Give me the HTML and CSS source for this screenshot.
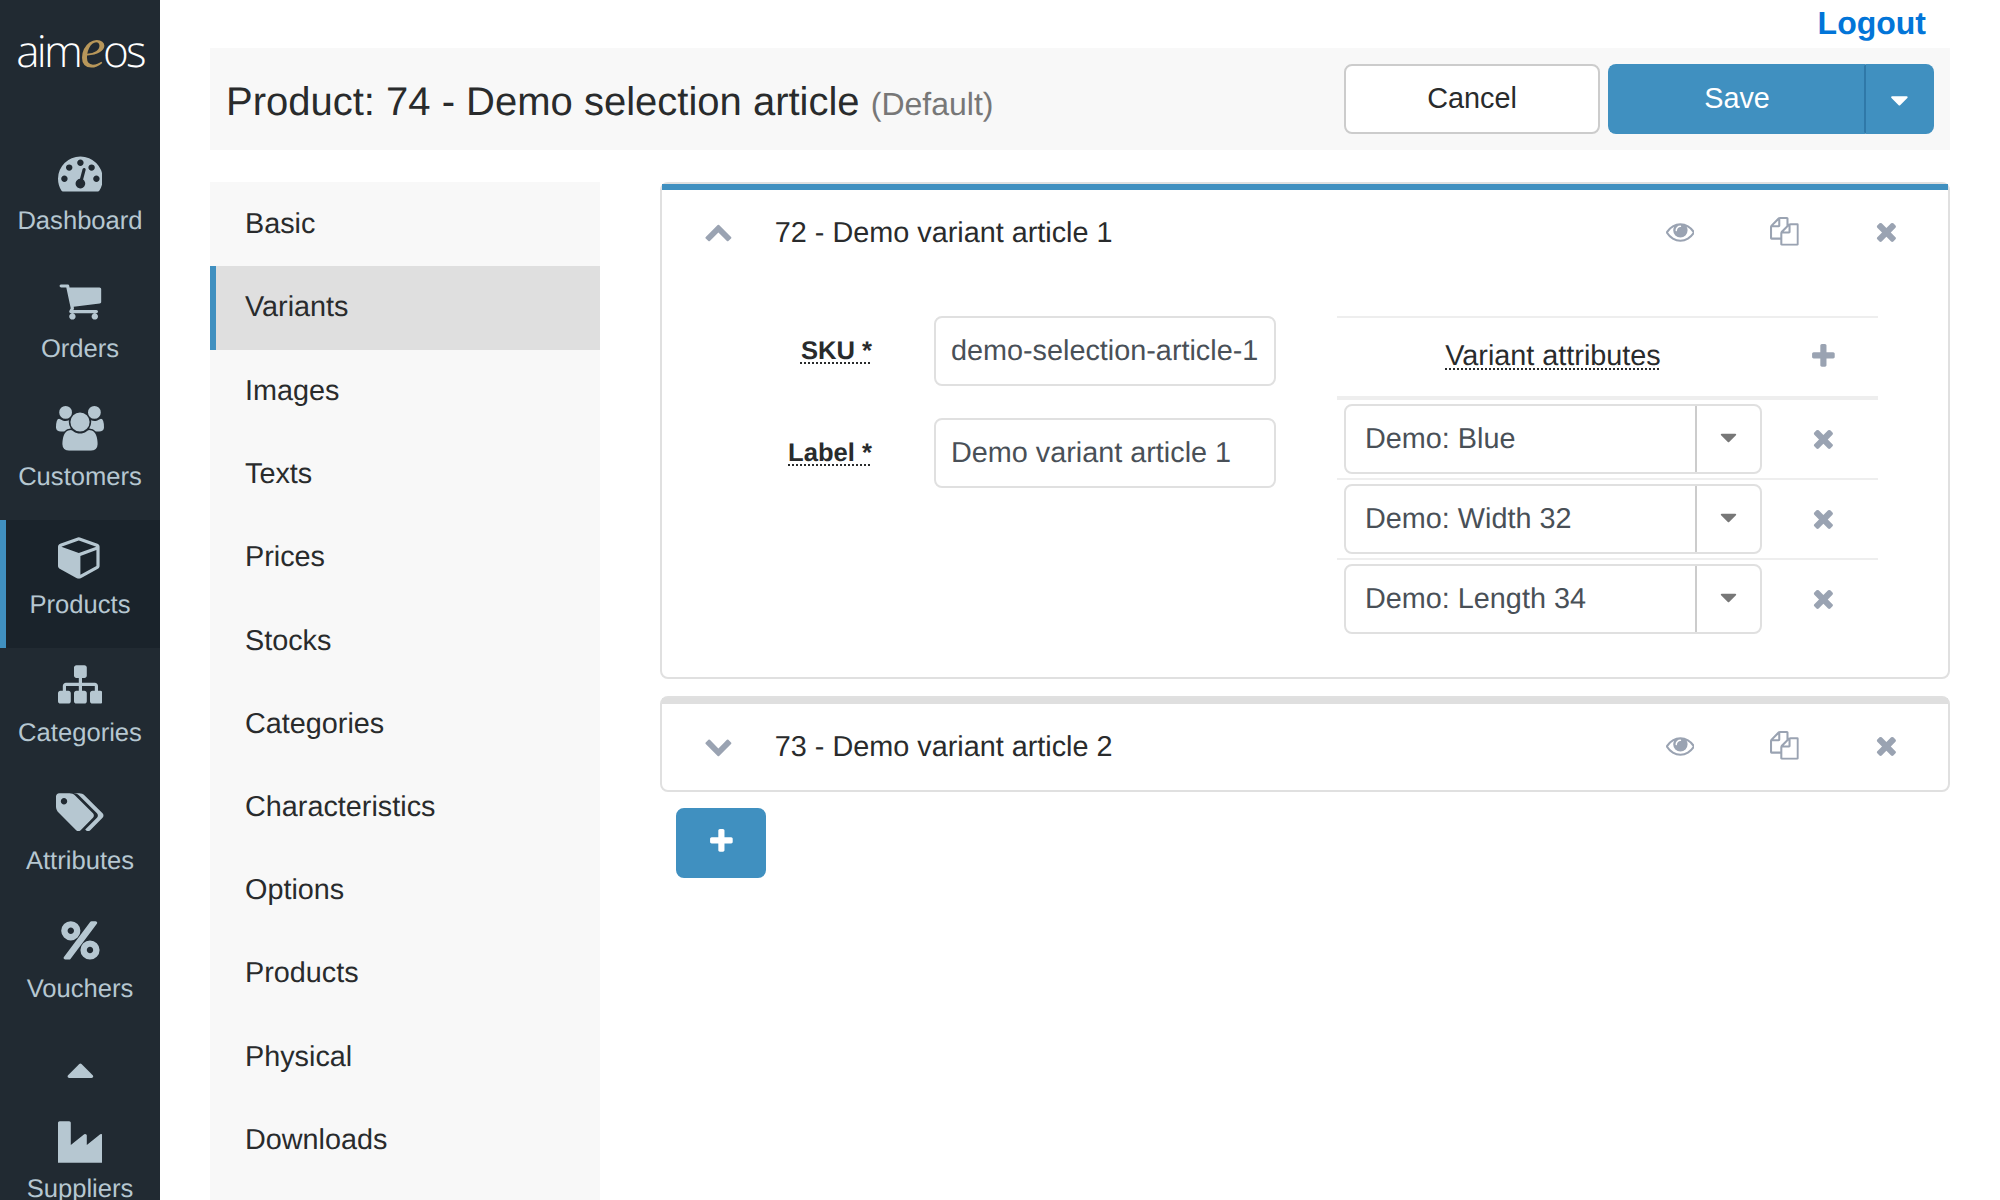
FILE: index.html
```html
<!DOCTYPE html>
<html>
<head>
<meta charset="utf-8">
<title>Product: 74 - Demo selection article</title>
<link rel="stylesheet" href="styles.css">
</head>
<body>
<svg class="sprite" xmlns="http://www.w3.org/2000/svg">
	<symbol id="i-dashboard" viewBox="0 0 1792 1792"><path d="M384 1152q0-53-37.5-90.5t-90.5-37.5-90.5 37.5-37.5 90.5 37.5 90.5 90.5 37.5 90.5-37.5 37.5-90.5zm192-448q0-53-37.5-90.5t-90.5-37.5-90.5 37.5-37.5 90.5 37.5 90.5 90.5 37.5 90.5-37.5 37.5-90.5zm428 481l101-382q6-26-7.5-48.5t-38.5-29.5-48 6.5-30 39.5l-101 382q-60 5-107 43.5t-63 98.5q-20 77 20 146t117 89 146-20 89-117q16-60-6-117t-72-91zm660-33q0-53-37.5-90.5t-90.5-37.5-90.5 37.5-37.5 90.5 37.5 90.5 90.5 37.5 90.5-37.5 37.5-90.5zm-640-640q0-53-37.5-90.5t-90.5-37.5-90.5 37.5-37.5 90.5 37.5 90.5 90.5 37.5 90.5-37.5 37.5-90.5zm448 192q0-53-37.5-90.5t-90.5-37.5-90.5 37.5-37.5 90.5 37.5 90.5 90.5 37.5 90.5-37.5 37.5-90.5zm320 448q0 261-141 483-19 29-54 29h-1402q-35 0-54-29-141-221-141-483 0-182 71-348t191-286 286-191 348-71 348 71 286 191 191 286 71 348z"/></symbol>
	<symbol id="i-cart" viewBox="0 0 1792 1792"><path d="M704 1536q0 52-38 90t-90 38-90-38-38-90 38-90 90-38 90 38 38 90zm896 0q0 52-38 90t-90 38-90-38-38-90 38-90 90-38 90 38 38 90zm128-1088v512q0 24-16.5 42.5t-40.5 21.5l-1044 122q13 60 13 70 0 16-24 64h920q26 0 45 19t19 45-19 45-45 19h-1024q-26 0-45-19t-19-45q0-11 8-31.5t16-36 21.5-40 15.5-29.5l-177-823h-204q-26 0-45-19t-19-45 19-45 45-19h256q16 0 28.5 6.5t19.5 15.5 13 24.5 8 26 5.5 29.5 4.5 26h1201q26 0 45 19t19 45z"/></symbol>
	<symbol id="i-users" viewBox="0 0 1920 1792"><path d="M593 896q-162 5-265 128h-134q-82 0-138-40.5t-56-118.5q0-353 124-353 6 0 43.5 21t97.5 42.5 119 21.5q67 0 133-23-5 37-5 66 0 139 81 256zm1071 637q0 120-73 189.5t-194 69.5h-874q-121 0-194-69.5t-73-189.5q0-53 3.5-103.5t14-109 26.5-108.5 43-97.5 62-81 85.5-53.5 111.5-20q10 0 43 21.5t73 48 107 48 135 21.5 135-21.5 107-48 73-48 43-21.5q61 0 111.5 20t85.5 53.5 62 81 43 97.5 26.5 108.5 14 109 3.5 103.5zm-1024-1277q0 106-75 181t-181 75-181-75-75-181 75-181 181-75 181 75 75 181zm704 384q0 159-112.5 271.5t-271.5 112.5-271.5-112.5-112.5-271.5 112.5-271.5 271.5-112.5 271.5 112.5 112.5 271.5zm576 225q0 78-56 118.5t-138 40.5h-134q-103-123-265-128 81-117 81-256 0-29-5-66 66 23 133 23 59 0 119-21.5t97.5-42.5 43.5-21q124 0 124 353zm-128-609q0 106-75 181t-181 75-181-75-75-181 75-181 181-75 181 75 75 181z"/></symbol>
	<symbol id="i-cube" viewBox="0 0 1792 1792"><path d="M896 1629l640-349v-636l-640 233v752zm-64-865l698-254-698-254-698 254zm832-252v768q0 35-18 65t-49 47l-704 384q-28 16-61 16t-61-16l-704-384q-31-17-49-47t-18-65v-768q0-40 23-73t61-47l704-256q22-8 44-8t44 8l704 256q38 14 61 47t23 73z"/></symbol>
	<symbol id="i-sitemap" viewBox="0 0 1792 1792"><path d="M1792 1248v320q0 40-28 68t-68 28h-320q-40 0-68-28t-28-68v-320q0-40 28-68t68-28h96v-192h-512v192h96q40 0 68 28t28 68v320q0 40-28 68t-68 28h-320q-40 0-68-28t-28-68v-320q0-40 28-68t68-28h96v-192h-512v192h96q40 0 68 28t28 68v320q0 40-28 68t-68 28h-320q-40 0-68-28t-28-68v-320q0-40 28-68t68-28h96v-192q0-52 38-90t90-38h512v-192h-96q-40 0-68-28t-28-68v-320q0-40 28-68t68-28h320q40 0 68 28t28 68v320q0 40-28 68t-68 28h-96v192h512q52 0 90 38t38 90v192h96q40 0 68 28t28 68z"/></symbol>
	<symbol id="i-tags" viewBox="0 0 1920 1792"><path d="M448 448q0-53-37.5-90.5t-90.5-37.5-90.5 37.5-37.5 90.5 37.5 90.5 90.5 37.5 90.5-37.5 37.5-90.5zm1067 576q0 53-37 90l-491 492q-39 37-91 37-53 0-90-37l-715-716q-38-37-64.5-101t-26.5-117v-416q0-52 38-90t90-38h416q53 0 117 26.5t102 64.5l715 714q37 39 37 91zm384 0q0 53-37 90l-491 492q-39 37-91 37-36 0-59-14t-53-45l470-470q37-37 37-90 0-52-37-91l-715-714q-38-38-102-64.5t-117-26.5h224q53 0 117 26.5t102 64.5l715 714q37 39 37 91z"/></symbol>
	<symbol id="i-percent" viewBox="0 0 1792 1792"><path d="M1408 1280q0-52-38-90t-90-38-90 38-38 90 38 90 90 38 90-38 38-90zm-768-768q0-52-38-90t-90-38-90 38-38 90 38 90 90 38 90-38 38-90zm1024 768q0 159-112.5 271.5t-271.5 112.5-271.5-112.5-112.5-271.5 112.5-271.5 271.5-112.5 271.5 112.5 112.5 271.5zm-96-1088q0 20-13 38l-1056 1408q-19 26-51 26h-160q-26 0-45-19t-19-45q0-20 13-38l1056-1408q19-26 51-26h160q26 0 45 19t19 45zm-672 320q0 159-112.5 271.5t-271.5 112.5-271.5-112.5-112.5-271.5 112.5-271.5 271.5-112.5 271.5 112.5 112.5 271.5z"/></symbol>
	<symbol id="i-industry" viewBox="0 0 1792 1792"><path d="M448 128q26 0 45 19t19 45v891l536-429q17-14 40-14 26 0 45 19t19 45v379l536-429q17-14 40-14 26 0 45 19t19 45v1152q0 26-19 45t-45 19h-1664q-26 0-45-19t-19-45v-1664q0-26 19-45t45-19h384z"/></symbol>
	<symbol id="i-caret-up" viewBox="0 0 1792 1792"><path d="M1408 1216q0 26-19 45t-45 19h-896q-26 0-45-19t-19-45 19-45l448-448q19-19 45-19t45 19l448 448q19 19 19 45z"/></symbol>
	<symbol id="i-caret-down" viewBox="0 0 1792 1792"><path d="M1408 704q0 26-19 45l-448 448q-19 19-45 19t-45-19l-448-448q-19-19-19-45t19-45 45-19h896q26 0 45 19t19 45z"/></symbol>
	<symbol id="i-up" viewBox="0 0 1792 1792"><path d="M1683 1331l-166 165q-19 19-45 19t-45-19l-531-531-531 531q-19 19-45 19t-45-19l-166-165q-19-19-19-45.5t19-45.5l742-741q19-19 45-19t45 19l742 741q19 19 19 45.5t-19 45.5z"/></symbol>
	<symbol id="i-down" viewBox="0 0 1792 1792"><path d="M1683 808l-742 741q-19 19-45 19t-45-19l-742-741q-19-19-19-45.5t19-45.5l166-165q19-19 45-19t45 19l531 531 531-531q19-19 45-19t45 19l166 165q19 19 19 45.5t-19 45.5z"/></symbol>
	<symbol id="i-eye" viewBox="0 0 1792 1792"><path d="M1664 960q-152-236-381-353 61 104 61 225 0 185-131.5 316.5t-316.5 131.5-316.5-131.5-131.5-316.5q0-121 61-225-229 117-381 353 133 205 333.5 326.5t434.5 121.5 434.5-121.5 333.5-326.5zm-720-384q0-20-14-34t-34-14q-125 0-214.5 89.5t-89.5 214.5q0 20 14 34t34 14 34-14 14-34q0-86 61-147t147-61q20 0 34-14t14-34zm848 384q0 34-20 69-140 230-376.5 368.5t-499.5 138.5-499.5-139-376.5-368q-20-35-20-69t20-69q140-229 376.5-368t499.5-139 499.5 139 376.5 368q20 35 20 69z"/></symbol>
	<symbol id="i-copy" viewBox="0 0 1792 1792"><path d="M1696 384q40 0 68 28t28 68v1216q0 40-28 68t-68 28h-960q-40 0-68-28t-28-68v-288h-544q-40 0-68-28t-28-68v-672q0-40 20-88t48-76l408-408q28-28 76-48t88-20h416q40 0 68 28t28 68v328q68-40 128-40h416zm-544 213l-299 299h299v-299zm-640-384l-299 299h299v-299zm196 647l316-316v-416h-384v416q0 40-28 68t-68 28h-416v640h512v-256q0-40 20-88t48-76zm956 804v-1152h-384v416q0 40-28 68t-68 28h-416v640h896z"/></symbol>
	<symbol id="i-times" viewBox="0 0 1792 1792"><path d="M1490 1322q0 40-28 68l-136 136q-28 28-68 28t-68-28l-294-294-294 294q-28 28-68 28t-68-28l-136-136q-28-28-28-68t28-68l294-294-294-294q-28-28-28-68t28-68l136-136q28-28 68-28t68 28l294 294 294-294q28-28 68-28t68 28l136 136q28 28 28 68t-28 68l-294 294 294 294q28 28 28 68z"/></symbol>
	<symbol id="i-plus" viewBox="0 0 1792 1792"><path d="M1600 736v192q0 40-28 68t-68 28h-416v416q0 40-28 68t-68 28h-192q-40 0-68-28t-28-68v-416h-416q-40 0-68-28t-28-68v-192q0-40 28-68t68-28h416v-416q0-40 28-68t68-28h192q40 0 68 28t28 68v416h416q40 0 68 28t28 68z"/></symbol>
</svg>

<div class="app">
	<nav class="sidebar">
		<div class="logo">aim<span class="logo-e">e</span>os</div>
		<a class="nav-item"><svg class="nav-icon"><use href="#i-dashboard"/></svg><span>Dashboard</span></a>
		<a class="nav-item"><svg class="nav-icon"><use href="#i-cart"/></svg><span>Orders</span></a>
		<a class="nav-item"><svg class="nav-icon wide"><use href="#i-users"/></svg><span>Customers</span></a>
		<a class="nav-item active"><svg class="nav-icon"><use href="#i-cube"/></svg><span>Products</span></a>
		<a class="nav-item"><svg class="nav-icon"><use href="#i-sitemap"/></svg><span>Categories</span></a>
		<a class="nav-item"><svg class="nav-icon wide"><use href="#i-tags"/></svg><span>Attributes</span></a>
		<a class="nav-item"><svg class="nav-icon"><use href="#i-percent"/></svg><span>Vouchers</span></a>
		<div class="nav-more"><svg class="nav-icon"><use href="#i-caret-up"/></svg></div>
		<a class="nav-item"><svg class="nav-icon"><use href="#i-industry"/></svg><span>Suppliers</span></a>
	</nav>

	<main class="main">
		<div class="topbar"><a class="logout">Logout</a></div>

		<div class="titlebar">
			<h1 class="title">Product: 74 - Demo selection article <small>(Default)</small></h1>
			<div class="actions">
				<button class="btn btn-cancel">Cancel</button>
				<div class="btn-group">
					<button class="btn btn-save">Save</button>
					<button class="btn btn-more"><svg class="caret"><use href="#i-caret-down"/></svg></button>
				</div>
			</div>
		</div>

		<div class="content">
			<ul class="tabs">
				<li>Basic</li>
				<li class="active">Variants</li>
				<li>Images</li>
				<li>Texts</li>
				<li>Prices</li>
				<li>Stocks</li>
				<li>Categories</li>
				<li>Characteristics</li>
				<li>Options</li>
				<li>Products</li>
				<li>Physical</li>
				<li>Downloads</li>
			</ul>

			<div class="items">
				<section class="card open">
					<header class="card-head">
						<svg class="icon toggle"><use href="#i-up"/></svg>
						<span class="card-title">72 - Demo variant article 1</span>
						<svg class="icon act-eye"><use href="#i-eye"/></svg>
						<svg class="icon act-copy"><use href="#i-copy"/></svg>
						<svg class="icon act-del"><use href="#i-times"/></svg>
					</header>
					<div class="card-body">
						<div class="form">
							<div class="form-row">
								<label class="form-label"><span class="hint">SKU *</span></label>
								<div class="input">demo-selection-article-1</div>
							</div>
							<div class="form-row">
								<label class="form-label"><span class="hint">Label *</span></label>
								<div class="input">Demo variant article 1</div>
							</div>
						</div>
						<div class="attrs">
							<div class="attrs-head">
								<div class="attrs-name"><span class="hint">Variant attributes</span></div>
								<div class="attrs-act"><svg class="icon"><use href="#i-plus"/></svg></div>
							</div>
							<div class="attrs-row">
								<div class="attrs-name">
									<div class="combo"><span class="combo-text">Demo: Blue</span><span class="combo-btn"><svg class="caret"><use href="#i-caret-down"/></svg></span></div>
								</div>
								<div class="attrs-act"><svg class="icon"><use href="#i-times"/></svg></div>
							</div>
							<div class="attrs-row">
								<div class="attrs-name">
									<div class="combo"><span class="combo-text">Demo: Width 32</span><span class="combo-btn"><svg class="caret"><use href="#i-caret-down"/></svg></span></div>
								</div>
								<div class="attrs-act"><svg class="icon"><use href="#i-times"/></svg></div>
							</div>
							<div class="attrs-row">
								<div class="attrs-name">
									<div class="combo"><span class="combo-text">Demo: Length 34</span><span class="combo-btn"><svg class="caret"><use href="#i-caret-down"/></svg></span></div>
								</div>
								<div class="attrs-act"><svg class="icon"><use href="#i-times"/></svg></div>
							</div>
						</div>
					</div>
				</section>

				<section class="card">
					<header class="card-head">
						<svg class="icon toggle"><use href="#i-down"/></svg>
						<span class="card-title">73 - Demo variant article 2</span>
						<svg class="icon act-eye"><use href="#i-eye"/></svg>
						<svg class="icon act-copy"><use href="#i-copy"/></svg>
						<svg class="icon act-del"><use href="#i-times"/></svg>
					</header>
				</section>

				<button class="btn btn-add"><svg class="icon"><use href="#i-plus"/></svg></button>
			</div>
		</div>
	</main>
</div>
</body>
</html>
```

FILE: styles.css
```css
html,body{margin:0;padding:0;height:1200px;overflow:hidden;background:#fff;}
body{font-family:"Liberation Sans",Arial,sans-serif;font-size:28.8px;line-height:1.5;color:#292b2c;text-rendering:geometricPrecision;}
.sprite{display:none;}
svg{fill:currentColor;display:block;}
button{font:inherit;cursor:pointer;}
.app{display:flex;height:1200px;overflow:hidden;}

/* sidebar */
.sidebar{flex:0 0 160px;width:160px;height:1200px;overflow:hidden;background:#212a32;color:#b6c7d1;}
.logo{height:136px;padding-top:18px;box-sizing:border-box;text-align:center;font-family:"Open Sans",sans-serif;font-weight:300;font-size:44px;line-height:64px;color:#fff;letter-spacing:-2.7px;}
.logo-e{font-family:"Liberation Serif",serif;font-style:italic;font-size:1.3em;line-height:1;color:#b8975a;}
.nav-item{display:flex;flex-direction:column;align-items:center;height:128px;box-sizing:border-box;padding-top:14px;font-size:25.6px;line-height:38.4px;}
.nav-item.active{background:#1a232b;border-left:6px solid #4090c0;padding-right:6px;}
.nav-item span{display:block;}
.nav-icon{width:44.8px;height:44.8px;margin-bottom:7px;}
.nav-icon.wide{width:48px;}
.nav-more{display:flex;justify-content:center;height:72px;padding-top:14px;box-sizing:border-box;}

/* main */
.main{flex:1;padding:0 50px;min-width:0;}
.topbar{height:48px;display:flex;justify-content:flex-end;padding-right:24px;}
.logout{font-size:32px;font-weight:bold;line-height:46px;color:#0275d8;}
.titlebar{display:flex;align-items:center;justify-content:space-between;height:102px;background:#f8f8f8;padding:0 16px;}
.title{margin:0;padding-top:6px;font-size:40px;font-weight:normal;line-height:1.1;}
.title small{font-size:32px;color:#777;}
.actions{display:flex;gap:8px;}
.btn{height:70px;box-sizing:border-box;border-radius:8px;border:2px solid transparent;padding:0;}
.btn-cancel{width:256px;background:#fff;border-color:#ccc;color:#292b2c;}
.btn-group{display:flex;}
.btn-save{width:258px;background:#4090c0;border-color:#4090c0;color:#fff;border-radius:8px 0 0 8px;border-right:2px solid #2f78a8;}
.btn-more{width:68px;background:#4090c0;border-color:#4090c0;color:#fff;border-radius:0 8px 8px 0;border-left:0;display:flex;align-items:center;justify-content:center;}
.caret{width:28.8px;height:28.8px;}
.btn-more .caret{margin-top:2px;}

/* tabs */
.content{display:flex;margin-top:32px;gap:60px;}
.tabs{flex:0 0 390px;margin:0;padding:0.5px 0 100px;list-style:none;background:#f8f8f8;}
.tabs li{padding:20px 35px;line-height:43.2px;}
.tabs li.active{background:#dfdfdf;border-left:6px solid #4090c0;padding:20.5px 35px 20.5px 29px;}

/* variant cards */
.items{flex:1;min-width:0;}
.card{border:2px solid #e0e0e0;border-radius:8px;margin-bottom:17px;background:#fff;}
.card-head{display:flex;align-items:center;height:86px;border-top:6px solid #dfdfdf;padding:0 47px 0 42px;}
.card.open .card-head{border-top-color:#4090c0;}
.card:not(.open){margin-bottom:16px;}
.card-head .icon{margin-top:-3px;}
.icon{width:28.8px;height:28.8px;flex:none;color:#9aa3b2;}
.card-title{margin-left:42px;padding-top:1px;flex:1;}
.act-copy{margin-left:76px;}
.act-del{margin-left:73px;}

.card-body{display:flex;padding:40px 70px 39px 0;}
.form{flex:0 0 675px;}
.form-row{display:flex;align-items:center;gap:62px;margin-bottom:32px;}
.form-label{flex:0 0 210px;padding-top:1px;text-align:right;font-size:25.6px;font-weight:bold;}
.hint{text-decoration:underline dotted 2px;text-underline-offset:3px;}
.input{width:342px;height:70px;box-sizing:border-box;border:2px solid #e0e0e0;border-radius:8px;padding:0 15px;line-height:66px;color:#495057;white-space:nowrap;}

.attrs{flex:1;border-top:2px solid #eee;}
.attrs-head{display:flex;align-items:center;height:78px;border-bottom:4px solid #eee;}
.attrs-name{flex:0 0 432px;text-align:center;}
.attrs-act{flex:0 0 108px;display:flex;justify-content:center;}
.attrs-act .icon{margin-top:-2px;}
.attrs-row{display:flex;align-items:center;height:78px;border-bottom:2px solid #eee;}
.attrs-row:last-child{border-bottom:0;}
.combo{display:flex;width:418px;height:70px;margin:0 7px;box-sizing:border-box;border:2px solid #e0e0e0;border-radius:8px;text-align:left;color:#495057;}
.combo-text{flex:1;padding-left:19px;line-height:66px;}
.combo-btn{flex:0 0 63px;border-left:2px solid #ccc;display:flex;align-items:center;justify-content:center;color:#777;}
.combo-btn .caret{width:27px;height:27px;margin-top:-3px;}

.btn-add{display:flex;align-items:center;justify-content:center;width:90px;margin-left:16px;background:#4090c0;border-color:#4090c0;}
.btn-add .icon{color:#fff;margin-top:-4px;}
```
